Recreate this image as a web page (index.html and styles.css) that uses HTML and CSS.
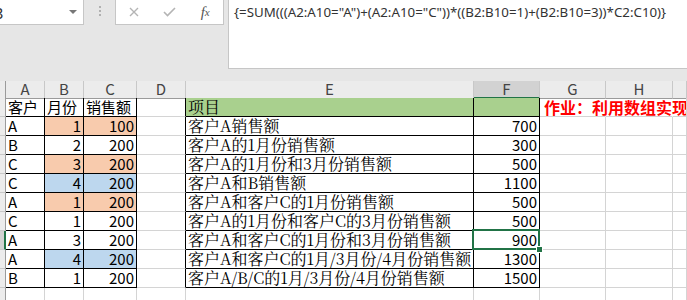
FILE: index.html
```html
<!DOCTYPE html>
<html lang="zh-CN">
<head>
    <meta charset="UTF-8">
    <title>数组公式</title>
    <link rel="stylesheet" href="styles.css">
</head>
<body>
    <div class="toolbar">
        <div class="name-box"><span class="name">3</span><span class="caret"></span></div>
        <div class="grip"><i></i><i></i><i></i></div>
        <div class="buttons">
            <span class="btn">
                <svg width="10" height="10" viewBox="0 0 10 10"><path d="M1 1L9 9M9 1L1 9" stroke="#b4b4b4" stroke-width="1.4" fill="none"/></svg>
            </span>
            <span class="btn">
                <svg width="13" height="10" viewBox="0 0 13 10"><path d="M1 5L4.5 8.5L12 1" stroke="#b4b4b4" stroke-width="1.6" fill="none"/></svg>
            </span>
            <span class="btn fx">f<small>x</small></span>
        </div>
        <div class="formula">{=SUM(((A2:A10="A")+(A2:A10="C"))*((B2:B10=1)+(B2:B10=3))*C2:C10)}</div>
    </div>

    <div class="sheet">
        <div class="row head">
            <div class="rh"></div>
            <div>A</div><div>B</div><div>C</div><div>D</div><div>E</div>
            <div class="on">F</div><div>G</div><div>H</div><div></div>
        </div>
        <div class="row">
            <div class="rh"></div>
            <div class="t">客户</div><div class="t">月份</div><div class="t">销售额</div><div class="d"></div>
            <div class="t e gr">项目</div><div class="t gr"></div>
            <div class="note">作业：利用数组实现</div><div class="ov"></div><div></div>
        </div>
        <div class="row">
            <div class="rh"></div>
            <div class="t">A</div><div class="t n or">1</div><div class="t n or">100</div><div class="d"></div>
            <div class="t e">客户A销售额</div><div class="t n">700</div>
            <div></div><div></div><div></div>
        </div>
        <div class="row">
            <div class="rh"></div>
            <div class="t">B</div><div class="t n">2</div><div class="t n">200</div><div class="d"></div>
            <div class="t e">客户A的1月份销售额</div><div class="t n">300</div>
            <div></div><div></div><div></div>
        </div>
        <div class="row">
            <div class="rh"></div>
            <div class="t">C</div><div class="t n or">3</div><div class="t n or">200</div><div class="d"></div>
            <div class="t e">客户A的1月份和3月份销售额</div><div class="t n">500</div>
            <div></div><div></div><div></div>
        </div>
        <div class="row">
            <div class="rh"></div>
            <div class="t">C</div><div class="t n bl">4</div><div class="t n bl">200</div><div class="d"></div>
            <div class="t e">客户A和B销售额</div><div class="t n">1100</div>
            <div></div><div></div><div></div>
        </div>
        <div class="row">
            <div class="rh"></div>
            <div class="t">A</div><div class="t n or">1</div><div class="t n or">200</div><div class="d"></div>
            <div class="t e">客户A和客户C的1月份销售额</div><div class="t n">500</div>
            <div></div><div></div><div></div>
        </div>
        <div class="row">
            <div class="rh"></div>
            <div class="t">C</div><div class="t n">1</div><div class="t n">200</div><div class="d"></div>
            <div class="t e">客户A的1月份和客户C的3月份销售额</div><div class="t n">500</div>
            <div></div><div></div><div></div>
        </div>
        <div class="row">
            <div class="rh on"></div>
            <div class="t">A</div><div class="t n">3</div><div class="t n">200</div><div class="d"></div>
            <div class="t e">客户A和客户C的1月份和3月份销售额</div><div class="t n sel">900</div>
            <div></div><div></div><div></div>
        </div>
        <div class="row">
            <div class="rh"></div>
            <div class="t">A</div><div class="t n bl">4</div><div class="t n bl">200</div><div class="d"></div>
            <div class="t e">客户A和客户C的1月/3月份/4月份销售额</div><div class="t n">1300</div>
            <div></div><div></div><div></div>
        </div>
        <div class="row">
            <div class="rh"></div>
            <div class="t">B</div><div class="t n">1</div><div class="t n">200</div><div class="d"></div>
            <div class="t e">客户A/B/C的1月/3月份/4月份销售额</div><div class="t n">1500</div>
            <div></div><div></div><div></div>
        </div>
        <div class="row">
            <div class="rh"></div>
            <div></div><div></div><div></div><div></div><div></div><div></div><div></div><div></div><div></div>
        </div>
    </div>
</body>
</html>
```

FILE: styles.css
```css
body {
    margin: 0;
    overflow: hidden;
    background: #fff;
    font-family: "Noto Sans CJK SC", sans-serif;
    color: #000;
}
.toolbar {
    display: flex;
    align-items: flex-start;
    height: 81px;
    background: #e6e6e6;
}
.name-box {
    width: 84px;
    height: 25px;
    box-sizing: border-box;
    display: flex;
    align-items: center;
    justify-content: space-between;
    overflow: hidden;
    background: #fff;
    border-right: 1px solid #c6c6c6;
    border-bottom: 1px solid #c6c6c6;
}
.name {
    margin-left: -5px;
    font-size: 15px;
    color: #333;
}
.caret {
    width: 0;
    height: 0;
    margin-right: 6px;
    border-left: 4px solid transparent;
    border-right: 4px solid transparent;
    border-top: 4px solid #777;
}
.grip {
    width: 31px;
    display: flex;
    flex-direction: column;
    align-items: center;
    gap: 2px;
    padding-top: 6px;
}
.grip i {
    width: 2px;
    height: 2px;
    background: #b0b0b0;
}
.buttons {
    width: 109px;
    height: 25px;
    box-sizing: border-box;
    display: flex;
    background: #fff;
    border: 1px solid #c6c6c6;
    border-top: 0;
}
.btn {
    width: 36px;
    display: flex;
    align-items: center;
    justify-content: center;
}
.fx {
    font-family: "Liberation Serif", serif;
    font-style: italic;
    font-size: 15px;
    color: #555;
}
.fx small {
    font-size: 11px;
}
.formula {
    flex: 1;
    height: 69px;
    box-sizing: border-box;
    margin-left: 4px;
    padding: 3px 5px;
    background: #fff;
    border-left: 1px solid #c6c6c6;
    border-bottom: 1px solid #c6c6c6;
    font-family: "Noto Sans", sans-serif;
    font-size: 13.3px;
    line-height: 18px;
    color: #333;
    white-space: nowrap;
}
.row {
    display: grid;
    grid-template-columns: 6px 39px 39px 53px 49px 288px 66px 66px 67px 1fr;
    height: 19px;
}
.row > div {
    box-sizing: border-box;
    padding: 0 2px;
    border-right: 1px solid #d4d4d4;
    border-bottom: 1px solid #d4d4d4;
    font-size: 15px;
    line-height: 18px;
    white-space: nowrap;
}
.head {
    height: 17px;
    background: #ececec;
}
.head > div {
    text-align: center;
    color: #444;
    line-height: 16px;
    border-right-color: #c8c8c8;
    border-bottom-color: #9b9b9b;
}
.head > div.on {
    background: #d2d2d2;
    border-bottom: 2px solid #217346;
}
.row > .rh {
    padding: 0;
    background: #ececec;
    border-right-color: #9b9b9b;
    border-bottom-color: #c8c8c8;
}
.row > .rh.on {
    background: #d2d2d2;
    border-right: 2px solid #217346;
}
.row > .t {
    border-right-color: #000;
    border-bottom-color: #000;
}
.row > .d {
    border-right-color: #000;
}
.n {
    text-align: right;
}
.or {
    background: #f8cbad;
}
.bl {
    background: #bdd7ee;
}
.gr {
    background: #a9d08e;
}
.row > .e {
    font-family: "Noto Serif CJK SC", "Noto Sans CJK SC", serif;
    font-size: 16px;
}
.row > .note {
    padding-left: 4px;
    color: #ff0000;
    font-weight: bold;
    font-size: 16px;
    border-right-color: transparent;
}
.row > .ov {
    border-right-color: transparent;
}
.sel {
    position: relative;
}
.sel::after {
    content: "";
    position: absolute;
    left: -2px;
    top: -2px;
    right: -1px;
    bottom: -1px;
    border: 2px solid #217346;
}
.sel::before {
    content: "";
    position: absolute;
    right: -4px;
    bottom: -4px;
    width: 7px;
    height: 7px;
    box-sizing: border-box;
    background: #217346;
    border: 1px solid #fff;
    z-index: 1;
}
```
